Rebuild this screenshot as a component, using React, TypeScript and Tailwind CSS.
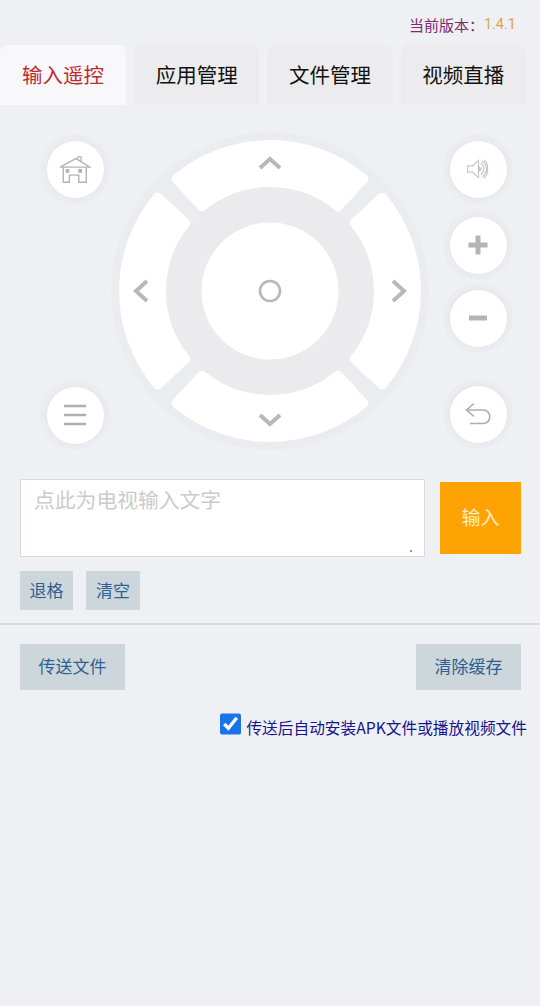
import type { ReactNode } from 'react';

const tabs = ['应用管理', '文件管理', '视频直播'];

function RoundButton({ children, className = '' }: { children: ReactNode; className?: string }) {
  return (
    <div className={`w-[70px] h-[70px] rounded-full bg-[#ebecf0] flex items-center justify-center ${className}`}>
      <div className="w-[57px] h-[57px] rounded-full bg-white shadow-[0_0_3px_#e2e2e6] flex items-center justify-center">
        {children}
      </div>
    </div>
  );
}

function HomeIcon() {
  return (
    <svg width="32" height="29" viewBox="0 0 34 30" fill="none" stroke="#b3b3b3" strokeWidth="1.3">
      <path d="M1 12.5 L18 3.5 L33 12.5 Z" strokeWidth="1.5" />
      <path d="M20 4.5 V1.5 H23.5 V6.5" />
      <path d="M4.5 12.5 V28.5 H11 V21 H21 V28.5 H29 V12.5" strokeWidth="1.5" />
      <rect x="7" y="14.5" width="4" height="4" fill="#b3b3b3" stroke="none" />
      <rect x="20.5" y="14.5" width="4" height="4" fill="#b3b3b3" stroke="none" />
    </svg>
  );
}

function SpeakerIcon() {
  return (
    <svg width="25" height="20" viewBox="0 0 26 22" fill="none" stroke="#c6c6c6" strokeWidth="1.3">
      <path d="M1 7.5 H6.5 L13 1.5 V20.5 L6.5 14.5 H1 Z" />
      <path d="M13 8 L16 11 L13 14 Z" fill="#c6c6c6" />
      <path d="M15.5 5 A 7 7 0 0 1 15.5 17" />
      <path d="M17 2.5 A 10 10 0 0 1 17 19.5" />
      <path d="M19 1 A 12 12 0 0 1 23 11 A 12 12 0 0 1 19 21" />
    </svg>
  );
}

function PlusIcon() {
  return (
    <svg width="20" height="20" viewBox="0 0 20 20" stroke="#b4b4b4" strokeWidth="5">
      <path d="M0.5 10 H19.5 M10 0.5 V19.5" />
    </svg>
  );
}

function MinusIcon() {
  return (
    <svg width="20" height="6" viewBox="0 0 20 6" stroke="#b4b4b4" strokeWidth="5">
      <path d="M1 3 H19" />
    </svg>
  );
}

function MenuIcon() {
  return (
    <svg width="24" height="22" viewBox="0 0 24 22" stroke="#b0b0b0" strokeWidth="2.6">
      <path d="M1 2 H23 M1 11 H23 M1 20 H23" />
    </svg>
  );
}

function BackIcon() {
  return (
    <svg width="26" height="24" viewBox="0 0 26 24" fill="none" stroke="#adadad" strokeWidth="1.6">
      <path d="M9 1.5 L1.5 8 L9 14.5" />
      <path d="M1.5 8 H18 C27 8 27 21.5 18 21.5 H5" />
    </svg>
  );
}

const segment = 'M -93.3 -112.2 A 146 146 0 0 1 93.3 -112.2 L 68 -85 A 108.5 108.5 0 0 0 -68 -85 Z';

function Dpad() {
  return (
    <svg width="318" height="318" viewBox="-159 -159 318 318" className="shrink-0">
      <circle r="159" fill="#ebecf0" />
      <circle r="104" fill="#ebebee" />
      {[0, 90, 180, 270].map((deg) => (
        <path
          key={deg}
          d={segment}
          transform={`rotate(${deg})`}
          fill="#ffffff"
          stroke="#ffffff"
          strokeWidth="10"
          strokeLinejoin="round"
        />
      ))}
      <circle r="68.5" fill="#ffffff" />
      <circle r="10" fill="none" stroke="#b8b8b8" strokeWidth="2.6" />
      <g fill="none" stroke="#b8b8b8" strokeWidth="4">
        <path d="M -10 -123 L 0 -132 L 10 -123" />
        <path d="M -10 124 L 0 133 L 10 124" />
        <path d="M -123 -10 L -134 0 L -123 10" />
        <path d="M 123 -10 L 134 0 L 123 10" />
      </g>
    </svg>
  );
}

export default function App() {
  return (
    <div className="w-[540px] h-[1006px] overflow-hidden bg-[#eff0f4] font-['Noto_Sans_CJK_SC','Noto_Sans',sans-serif]">
      <div className="h-[45px] pr-[24px] pt-[14px] flex justify-end text-[15px] leading-[22px]">
        <span className="text-[#7d2a6e]">当前版本：</span>
        <span className="text-[14.5px] text-[#e2a04c] font-['Roboto',sans-serif]">1.4.1</span>
      </div>

      <div className="flex gap-2 h-[60px] w-[526px]">
        <div className="w-[126px] pb-[2px] rounded-t-lg bg-[#f8f8fa] flex items-center justify-center text-[20.5px] text-[#bd2c2f]">
          输入遥控
        </div>
        {tabs.map((t) => (
          <div key={t} className="flex-1 pb-[2px] rounded-t-lg bg-[#ececee] flex items-center justify-center text-[20.5px] text-[#111111]">
            {t}
          </div>
        ))}
      </div>

      <div className="mt-[27px] flex pl-10 h-[318px]">
        <div className="w-[70px] pt-[2px] flex flex-col justify-between">
          <RoundButton><HomeIcon /></RoundButton>
          <RoundButton><MenuIcon /></RoundButton>
        </div>
        <div className="ml-px">
          <Dpad />
        </div>
        <div className="ml-[14px] w-[70px] pt-[2px] flex flex-col">
          <RoundButton><SpeakerIcon /></RoundButton>
          <RoundButton className="mt-[6px]"><PlusIcon /></RoundButton>
          <RoundButton className="mt-[3px]"><MinusIcon /></RoundButton>
          <RoundButton className="mt-[26px]"><BackIcon /></RoundButton>
        </div>
      </div>

      <div className="mt-[29px] pl-5 flex items-start gap-[15px]">
        <div className="relative w-[405px] h-[78px]">
          <textarea
            readOnly
            placeholder="点此为电视输入文字"
            className="w-full h-full resize-none block bg-white border-[1.5px] border-[#d9d9dd] px-[13px] py-[1px] text-[20.8px] leading-[36px] outline-none placeholder:text-[#cbcbcb]"
          />
          <div className="absolute right-[13px] bottom-[5px] w-[2px] h-[2px] rounded-full bg-[#777777]" />
        </div>
        <div className="mt-[3px] w-[81px] h-[72px] pb-[2px] bg-[#ffa305] flex items-center justify-center text-[19px] text-[#ffeec8]">
          输入
        </div>
      </div>

      <div className="mt-[14px] pl-5 flex gap-[13px]">
        <div className="w-[53px] h-[39px] pb-[2px] bg-[#cdd6da] flex items-center justify-center text-[17px] text-[#2f5f92]">退格</div>
        <div className="w-[54px] h-[39px] pb-[2px] bg-[#cdd6da] flex items-center justify-center text-[17px] text-[#2f5f92]">清空</div>
      </div>

      <div className="mt-[13px] h-[2px] bg-[#d9d9dd]" />

      <div className="mt-[19px] px-5 pr-[19px] flex justify-between">
        <div className="w-[105px] h-[46px] pb-[2px] bg-[#cdd6da] flex items-center justify-center text-[17px] text-[#2f5f92]">传送文件</div>
        <div className="w-[105px] h-[46px] pb-[2px] bg-[#cdd6da] flex items-center justify-center text-[17px] text-[#2f5f92]">清除缓存</div>
      </div>

      <div className="mt-[23px] pr-[13px] flex justify-end items-start">
        <input type="checkbox" defaultChecked className="w-[21px] h-[22px] m-0 accent-[#1a73e8]" />
        <span className="ml-[5px] mt-[3px] text-[15.7px] leading-[24px] text-[#14148c]">传送后自动安装APK文件或播放视频文件</span>
      </div>
    </div>
  );
}
